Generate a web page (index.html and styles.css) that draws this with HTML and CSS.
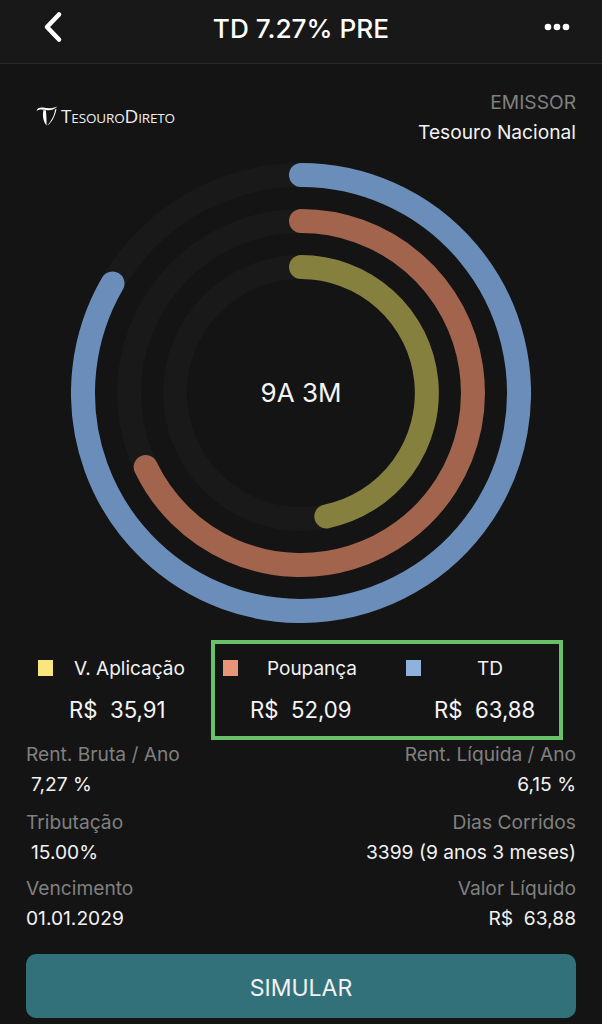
FILE: index.html
```html
<!DOCTYPE html>
<html lang="pt-BR">
<head>
<meta charset="utf-8">
<title>TD 7.27% PRE</title>
<link rel="stylesheet" href="styles.css">
</head>
<body>
<div class="screen">
  <header class="nav">
    <svg class="back" width="24" height="32" viewBox="0 0 24 32"><path d="M19 3.500 7 16l12 12.500" fill="none" stroke="#fff" stroke-width="4.600" stroke-linecap="round" stroke-linejoin="round"/></svg>
    <h1 class="title">TD 7.27% PRE</h1>
    <svg class="more" width="26" height="8" viewBox="0 0 26 8"><circle cx="4" cy="4" r="3.300" fill="#fff"/><circle cx="13" cy="4" r="3.300" fill="#fff"/><circle cx="22" cy="4" r="3.300" fill="#fff"/></svg>
  </header>

  <section class="issuer">
    <div class="logo">
      <svg class="logo-mark" width="22" height="20" viewBox="0 0 22 20"><path d="M.5 5C1 2 4 1 7 1.500c4 .8 9 1.500 14.500-1-2.500 2.500-6 4-10 3.700C8 3.900 4 2.500.5 5Z" fill="#fff"/><path d="M7.500 4c-1.200 5-.5 11 3 15.500.3-5-.3-10.500-.5-15Z" fill="#fff"/><path d="M19 3.500c-.5 6-4 12-8 16 3.500-1.500 8-8 9.500-16.500Z" fill="#fff"/></svg>
      <span class="logo-text"><span class="cap">T</span>ESOURO<span class="cap">D</span>IRETO</span>
    </div>
    <div class="issuer-info">
      <div class="label">EMISSOR</div>
      <div class="value">Tesouro Nacional</div>
    </div>
  </section>

  <section class="chart">
    <svg width="460" height="460" viewBox="0 0 460 460">
      <g fill="none" stroke="#191919" stroke-width="24">
        <circle cx="230" cy="230" r="218"/>
        <circle cx="230" cy="230" r="172"/>
        <circle cx="230" cy="230" r="126"/>
      </g>
      <g fill="none" stroke-width="24" stroke-linecap="round">
        <path d="M230 12A218 218 0 1 1 41.500 120.500" stroke="#6b8db9"/>
        <path d="M230 58A172 172 0 1 1 74.700 304" stroke="#a2644c"/>
        <path d="M230 104A126 126 0 0 1 255.300 353.400" stroke="#85803e"/>
      </g>
    </svg>
    <div class="chart-center">9A 3M</div>
  </section>

  <section class="legend">
    <div class="legend-item first">
      <div class="legend-head"><span class="swatch yellow"></span><span class="legend-name">V. Aplicação</span></div>
      <div class="legend-value">R$&nbsp; 35,91</div>
    </div>
    <div class="legend-box">
      <div class="legend-item">
        <div class="legend-head"><span class="swatch salmon"></span><span class="legend-name">Poupança</span></div>
        <div class="legend-value">R$&nbsp; 52,09</div>
      </div>
      <div class="legend-item last">
        <div class="legend-head"><span class="swatch blue"></span><span class="legend-name">TD</span></div>
        <div class="legend-value">R$&nbsp; 63,88</div>
      </div>
    </div>
  </section>

  <section class="details">
    <div class="row">
      <div class="cell"><div class="label">Rent. Bruta / Ano</div><div class="value indent">7,27 %</div></div>
      <div class="cell right"><div class="label">Rent. Líquida / Ano</div><div class="value">6,15 %</div></div>
    </div>
    <div class="row">
      <div class="cell"><div class="label">Tributação</div><div class="value indent">15.00%</div></div>
      <div class="cell right"><div class="label">Dias Corridos</div><div class="value">3399 (9 anos 3 meses)</div></div>
    </div>
    <div class="row">
      <div class="cell"><div class="label">Vencimento</div><div class="value">01.01.2029</div></div>
      <div class="cell right"><div class="label">Valor Líquido</div><div class="value">R$&nbsp; 63,88</div></div>
    </div>
  </section>

  <button class="cta">SIMULAR</button>
</div>
</body>
</html>
```
FILE: styles.css
```css
* { box-sizing: border-box; }
html, body { margin: 0; padding: 0; }
body {
  background: #141414;
  color: #f2f2f2;
  font-family: Inter, "Noto Sans", "Liberation Sans", sans-serif;
}
.screen {
  width: 602px;
  height: 1024px;
  overflow: hidden;
  display: flex;
  flex-direction: column;
}
.nav {
  height: 64px;
  flex: none;
  background: #181818;
  border-bottom: 1px solid #2a2a2a;
  display: flex;
  align-items: center;
  justify-content: space-between;
  padding: 0 32px 10px 40px;
  position: relative;
}
.title {
  margin: 0;
  font-size: 26.200px;
  font-weight: 500;
  color: #fff;
  position: absolute;
  left: 0;
  right: 0;
  top: 14px;
  text-align: center;
  line-height: 30px;
}
.issuer {
  display: flex;
  justify-content: space-between;
  align-items: center;
  padding: 18px 26px 0 36px;
  height: 88px;
  flex: none;
}
.logo { display: flex; align-items: center; gap: 3px; padding-bottom: 2px; }
.logo-text {
  font-family: "Open Sans", "Liberation Sans", sans-serif;
  font-size: 13.500px;
  color: #f0f0f0;
  letter-spacing: -0.150px;
  white-space: nowrap;
}
.cap { font-size: 19px; }
.issuer-info { text-align: right; }
.label { font-size: 19.200px; line-height: 30px; color: #808080; }
.value { font-size: 19.200px; line-height: 30px; color: #f2f2f2; }
.indent { padding-left: 5px; }
.chart {
  flex: none;
  height: 460px;
  margin-top: 11px;
  display: flex;
  justify-content: center;
  position: relative;
}
.chart-center {
  position: absolute;
  left: 0;
  right: 0;
  top: 215px;
  text-align: center;
  font-size: 26px;
  line-height: 30px;
  color: #f4f4f4;
}
.legend {
  flex: none;
  display: flex;
  height: 100px;
  margin-top: 17px;
}
.legend-item { display: flex; flex-direction: column; width: 183px; }
.last { width: 153px; }
.first { width: 211px; padding-left: 38px; }
.legend-box {
  display: flex;
  width: 352px;
  height: 100px;
  border: 4px solid #68c068;
  padding-left: 8px;
}
.legend-head {
  display: flex;
  align-items: center;
  height: 30px;
  margin-top: 9px;
  font-size: 19px;
}
.first .legend-head { margin-top: 13px; }
.swatch { width: 15px; height: 16px; flex: none; }
.yellow { background: #fbe67e; }
.salmon { background: #e6957a; }
.blue { background: #8eb2dc; }
.legend-name { flex: 1; text-align: center; padding-right: 20px; color: #f2f2f2; }
.last .legend-name { padding-right: 0; }
.first .legend-name { padding-right: 0; text-align: left; padding-left: 21px; }
.legend-value {
  font-size: 22.200px;
  line-height: 30px;
  margin-top: 12px;
  padding-left: 27px;
  color: #f4f4f4;
  white-space: nowrap;
}
.last .legend-value { padding-left: 28px; }
.first .legend-value { padding-left: 31px; }
.details { flex: none; padding: 0 26px; margin-top: -1px; }
.row { display: flex; justify-content: space-between; height: 68px; }
.row + .row { height: 66px; }
.right { text-align: right; }
.cta {
  flex: none;
  display: block;
  margin: 15px 26px 0;
  padding-top: 4px;
  width: 550px;
  height: 64px;
  border: 0;
  border-radius: 10px;
  background: #33717a;
  color: #f2f2f2;
  font-family: inherit;
  font-size: 23px;
}
```
